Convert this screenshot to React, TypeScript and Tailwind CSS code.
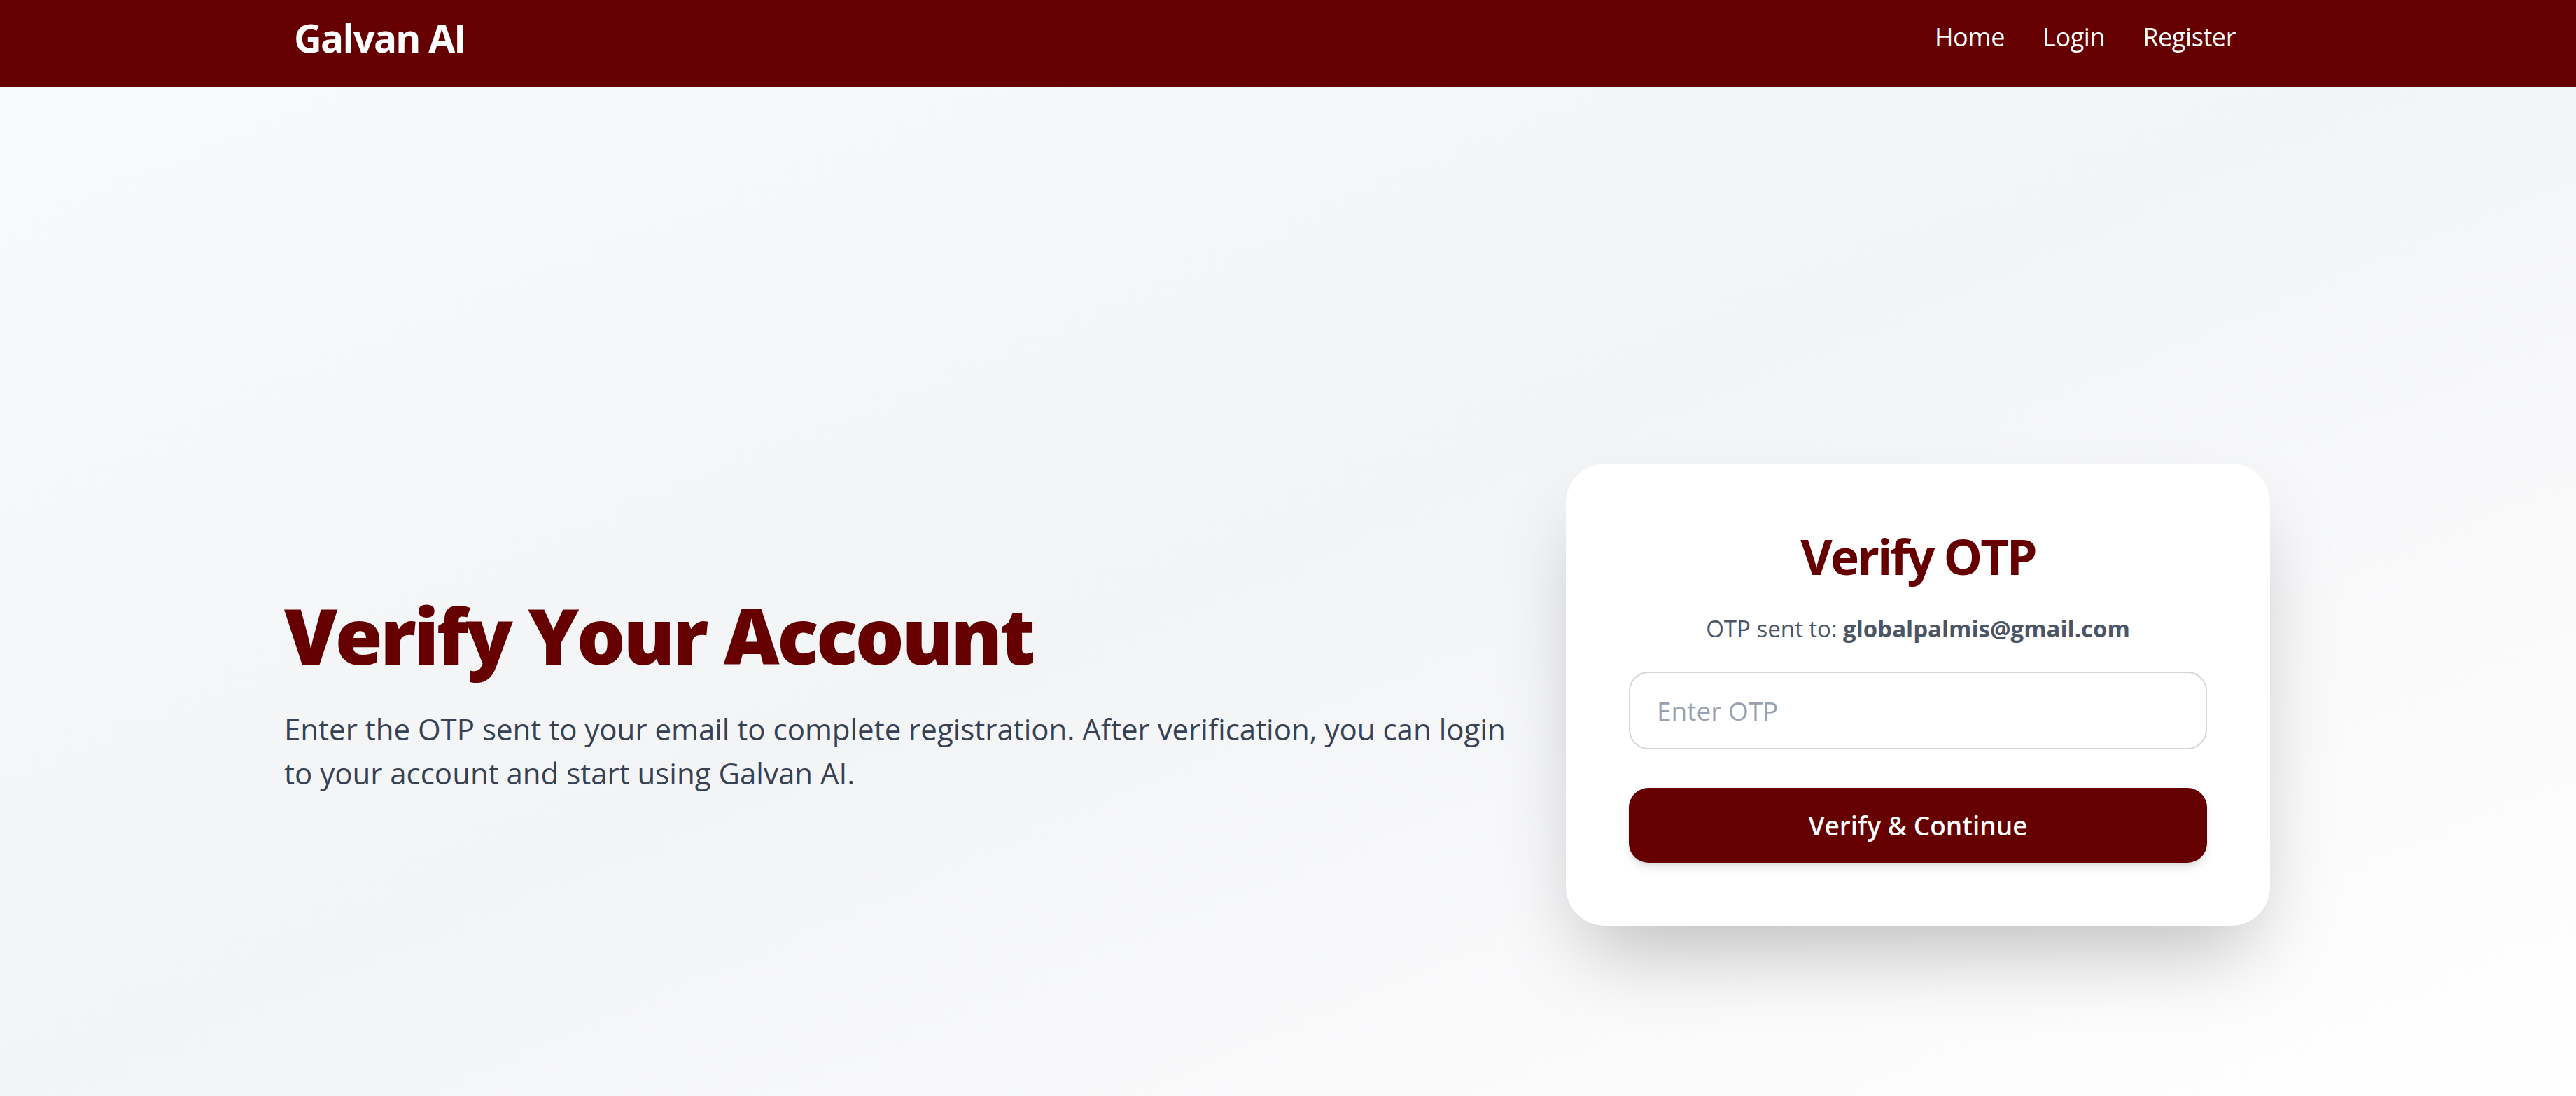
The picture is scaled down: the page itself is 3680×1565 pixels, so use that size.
const navLinks = ['Home', 'Login', 'Register'];

export default function App() {
  return (
    <div className="min-h-screen bg-linear-to-br from-gray-50 via-gray-100 to-white font-['Open_Sans','Noto_Sans',sans-serif]">
      <nav className="flex h-[124px] items-center justify-between bg-[#660000] pb-[18px] pl-[420px] pr-[486px]">
        <a href="#" className="text-[55px] font-bold leading-[75px] tracking-[-1.8px] text-white">
          Galvan AI
        </a>
        <div className="flex items-center gap-[54px]">
          {navLinks.map((link) => (
            <a key={link} href="#" className="text-[36px] font-medium leading-[56px] tracking-[-0.4px] text-white">
              {link}
            </a>
          ))}
        </div>
      </nav>

      <main className="flex items-center gap-[56px] pb-[120px] pl-[406px] pr-[437px] pt-[538px]">
        <div className="min-w-0 flex-1">
          <h1 className="mb-[47px] text-[110px] font-extrabold leading-[112px] tracking-[-3.5px] text-[#660000]">
            Verify Your Account
          </h1>
          <p className="text-[42px] leading-[63px] text-gray-700">
            Enter the OTP sent to your email to complete registration. After verification, you can login to your account and start using Galvan AI.
          </p>
        </div>

        <div className="w-[1006px] shrink-0 rounded-[56px] bg-white p-[90px] shadow-[0_59px_117px_-28px_rgba(0,0,0,0.25)]">
          <h2 className="text-center text-[70px] font-bold leading-[84px] tracking-[-3px] text-[#660000]">Verify OTP</h2>
          <p className="mt-[38px] text-center text-[33px] leading-[47px] text-gray-600">
            OTP sent to: <span className="font-bold">globalpalmis@gmail.com</span>
          </p>
          <input
            type="text"
            placeholder="Enter OTP"
            className="mt-[38px] h-[111px] w-full rounded-[28px] border-2 border-gray-300 bg-white px-[38px] text-[37px] text-gray-800 outline-none placeholder:text-gray-400"
          />
          <button
            type="button"
            className="mt-[55px] h-[107px] w-full rounded-[28px] bg-[#660000] text-[37px] font-semibold text-white shadow-[0_9px_14px_-2px_rgba(0,0,0,0.1),0_5px_9px_-5px_rgba(0,0,0,0.1)]"
          >
            Verify &amp; Continue
          </button>
        </div>
      </main>
    </div>
  );
}
